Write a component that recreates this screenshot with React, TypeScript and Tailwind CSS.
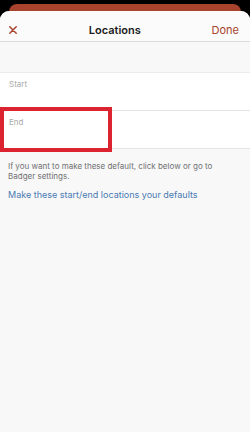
export default function App() {
  return (
    <div className="w-[250px] h-[432px] bg-black pt-[4px] overflow-hidden font-['Inter',sans-serif]">
      {/* card peeking behind the sheet */}
      <div className="mx-[9px] h-[20px] bg-[#a8432e] rounded-t-[8px]" />

      {/* SHEET */}
      <div className="-mt-[13px] h-[421px] bg-[#f8f8f9] rounded-t-[9px] flex flex-col">

        {/* HEADER */}
        <div className="h-[31px] flex items-center justify-between px-[8px] pt-[8px] bg-[#fbfbfb] border-b border-[#dcdcdc] rounded-t-[9px]">
          <svg width="10" height="10" viewBox="0 0 10 10">
            <path d="M1.8 1.8 L8.2 8.2 M8.2 1.8 L1.8 8.2" stroke="#a8432e" strokeWidth="1.5" strokeLinecap="round" />
          </svg>
          <div className="text-[11px] font-semibold text-[#1c1c1c]">
            Locations
          </div>
          <div className="text-[11px] text-[#a8432e] pr-[3px]">
            Done
          </div>
        </div>

        {/* ROWS */}
        <div className="mt-[30px] bg-white border-t border-[#ececec]">
          <div className="h-[38px] border-b border-[#e4e4e4] px-[9px] pt-[5px]">
            <div className="text-[8px] text-[#a9a9a9]">Start</div>
          </div>
          <div className="relative h-[38px] border-b border-[#e4e4e4] px-[9px] pt-[5px]">
            <div className="text-[8px] text-[#a9a9a9]">End</div>
            <div className="absolute left-0 top-[-4px] w-[112px] h-[45px] border-[4px] border-[#dc2330]" />
          </div>
        </div>

        {/* HELP TEXT */}
        <div className="px-[8px] pt-[12px] max-w-[234px] text-[8px] leading-[10px] text-[#707070]">
          If you want to make these default, click below or go to Badger settings.
        </div>
        <div className="px-[8px] mt-[7px] text-[9px] text-[#4a7bb2]">
          Make these start/end locations your defaults
        </div>

      </div>
    </div>
  );
}
